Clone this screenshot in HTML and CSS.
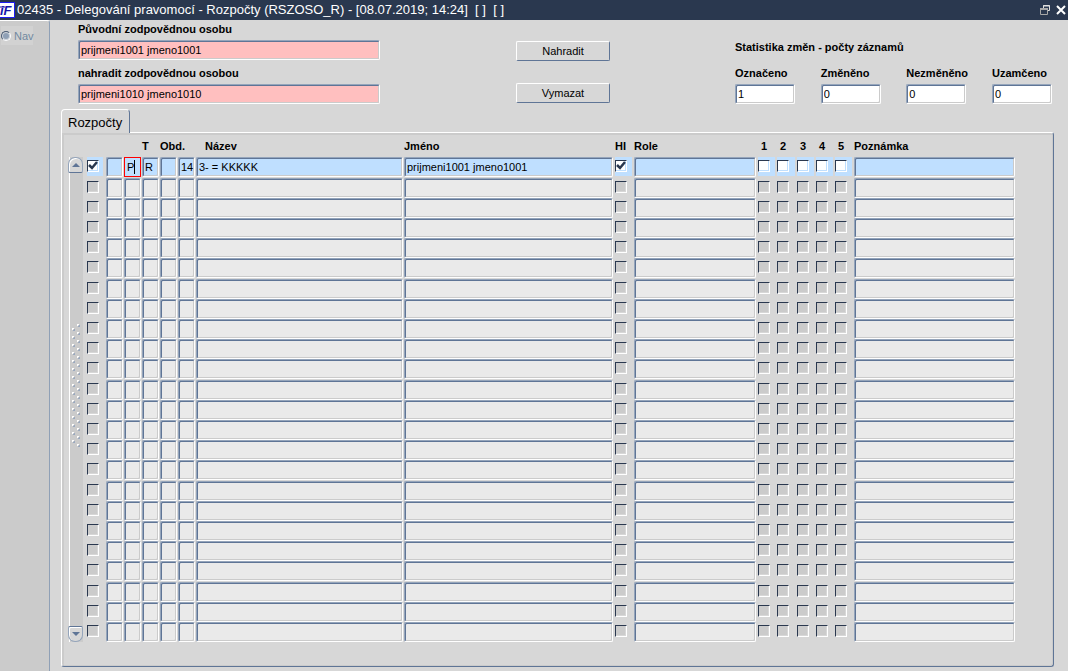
FILE: index.html
```html
<!DOCTYPE html>
<html lang="cs">
<head>
<meta charset="utf-8">
<title>Delegování pravomocí - Rozpočty</title>
<link rel="stylesheet" href="styles.css">
<script src="app.js" defer></script>
</head>
<body>
<div class="app">
  <header class="titlebar">
    <svg class="logo" width="15" height="18" viewBox="0 0 15 18" aria-hidden="true">
      <rect x="-1.500" y="1.500" width="16" height="15" fill="#fff" stroke="#1c1cf0"/>
      <path d="M0 6H5" stroke="#1515a8"/>
      <text class="logo-text" x="0" y="14">iF</text>
    </svg>
    <h1 class="title">02435 - Delegování pravomocí - Rozpočty (RSZOSO_R) - [08.07.2019; 14:24]&nbsp; [ ]&nbsp; [ ]</h1>
    <div class="window-buttons">
      <button class="window-button" type="button" aria-label="Obnovit">
        <svg width="11" height="10" viewBox="0 0 11 10" fill="none"><path d="M3.500 3V.5H9.500V5.500H8M3 1H10" stroke="#e0e0e0"/><path d="M.5 4V9.500H7.500V4" stroke="#a8a8a8"/><path d="M0 4H8" stroke="#a8a8a8" stroke-width="2"/></svg>
      </button>
      <button class="window-button" type="button" aria-label="Zavřít">
        <svg width="10" height="10" viewBox="0 0 10 10" fill="none"><path d="M1 1L9 9M9 1L1 9" stroke="#fff" stroke-width="2"/></svg>
      </button>
    </div>
  </header>
  <div class="body">
    <aside class="sidebar">
      <label class="nav"><input class="nav-radio" type="radio" name="nav" disabled>Nav</label>
    </aside>
    <main class="workspace">
      <form class="form">
        <div class="people">
          <label class="caption" for="from">Původní zodpovědnou osobu</label>
          <input class="field person" id="from" value="prijmeni1001 jmeno1001">
          <label class="caption" for="to">nahradit zodpovědnou osobou</label>
          <input class="field person" id="to" value="prijmeni1010 jmeno1010">
        </div>
        <div class="actions">
          <button class="button" type="button">Nahradit</button>
          <button class="button" type="button">Vymazat</button>
        </div>
        <section class="stats">
          <h2 class="caption stats-title">Statistika změn - počty záznamů</h2>
          <div class="stats-list">
            <label class="stat caption">Označeno<input class="field" value="1"></label>
            <label class="stat caption">Změněno<input class="field" value="0"></label>
            <label class="stat caption">Nezměněno<input class="field" value="0"></label>
            <label class="stat caption">Uzamčeno<input class="field" value="0"></label>
          </div>
        </section>
      </form>
      <div class="tabs"><button class="tab" type="button">Rozpočty</button></div>
      <section class="panel">
        <div class="scroll">
          <button class="scroll-button scroll-up" type="button" aria-label="Nahoru"><svg width="8" height="4" viewBox="0 0 8 4"><path d="M0 4L4 0L8 4Z" fill="#5f7596"/></svg></button>
          <svg class="grip" width="8" height="124" aria-hidden="true">
            <defs><pattern id="dots" width="8" height="8" patternUnits="userSpaceOnUse">
              <path d="M5 0h2v1h-1v1h-1zM0 4h2v1h-1v1h-1z" fill="#fff"/>
              <path d="M7 1h1v2h-2v-1h1zM2 5h1v2h-2v-1h1z" fill="#9aa9bf"/>
            </pattern></defs>
            <rect width="8" height="124" fill="url(#dots)"/>
          </svg>
          <button class="scroll-button scroll-down" type="button" aria-label="Dolů"><svg width="8" height="4" viewBox="0 0 8 4"><path d="M0 0L4 4L8 0Z" fill="#5f7596"/></svg></button>
        </div>
        <table class="records">
          <thead>
            <tr class="row head">
              <th></th><th></th><th></th><th>T</th><th>Obd.</th><th></th><th class="name-head">Název</th><th>Jméno</th><th>HI</th><th>Role</th>
              <th class="num">1</th><th class="num">2</th><th class="num">3</th><th class="num">4</th><th class="num">5</th><th>Poznámka</th>
            </tr>
          </thead>
          <tbody id="records"></tbody>
        </table>
      </section>
    </main>
  </div>
</div>
</body>
</html>
```
FILE: styles.css
```css
* { box-sizing: border-box; }
body {
  margin: 0;
  background: #d7d7d7;
  color: #000;
  font: 11px/14px "Liberation Sans", Arial, sans-serif;
}
button, input { font: inherit; color: inherit; margin: 0; }
h1, h2 { margin: 0; }
.app { display: flex; flex-direction: column; min-height: 100vh; }

.titlebar {
  display: flex;
  align-items: center;
  gap: 2px;
  height: 20px;
  padding-right: 2px;
  background: #2a384f;
  color: #fff;
}
.logo { flex: none; }
.logo-text { font: italic bold 13px "Liberation Sans", Arial, sans-serif; fill: #1515a8; }
.title { flex: 1; font-size: 13px; font-weight: 400; line-height: 18px; white-space: nowrap; }
.window-buttons { display: flex; gap: 5px; }
.window-button { display: flex; padding: 0; border: 0; background: none; }

.body { display: flex; flex: 1; }
.sidebar {
  flex: none;
  width: 50px;
  padding-top: 5px;
  border-top: 1px solid #fff;
  border-right: 1px solid #8fa0b6;
  border-top-right-radius: 3px;
  background: #cbcbcb;
}
.nav {
  display: flex;
  align-items: center;
  gap: 3px;
  width: 32px;
  height: 19px;
  margin-left: 1px;
  background: #d2d2d2;
  color: #7189a0;
}
.nav-radio {
  appearance: none;
  flex: none;
  width: 10px;
  height: 10px;
  border: 1px solid #4c5d75;
  border-right-color: #fff;
  border-bottom-color: #fff;
  border-radius: 50%;
  background: #8fa0b6;
  box-shadow: inset 0 0 0 1px #d0d4da;
}

.workspace { flex: 1; min-width: 0; padding: 2px 14px 4px 11px; }
.form {
  display: grid;
  grid-template-columns: 302px 136fr 94px 125fr 317px;
  padding: 0 2px 5px 17px;
}
.caption { font-weight: 700; white-space: nowrap; }
.people { display: flex; flex-direction: column; }
.people .caption { height: 18px; }
.person + .caption { margin-top: 6px; }
.actions { grid-column: 3; display: flex; flex-direction: column; gap: 22px; padding-top: 19px; }
.button {
  height: 20px;
  padding: 0;
  border: 1px solid #fff;
  border-right-color: #5f7596;
  border-bottom-color: #5f7596;
  border-radius: 2px;
  background: #d7d7d7;
}
.stats { grid-column: 5; padding-top: 18px; }
.stats-title { font-size: 11px; line-height: 14px; }
.stats-list { display: flex; justify-content: space-between; margin-top: 12px; }
.stat { display: flex; flex-direction: column; gap: 4px; width: 60px; }

.field {
  display: block;
  width: 100%;
  min-width: 0;
  height: 20px;
  padding: 0 0 0 2px;
  border: 1px solid #95a5bb;
  border-right-color: #fff;
  border-bottom-color: #fff;
  border-radius: 2px;
  outline: 0;
  background: #eaeaea;
  box-shadow: inset 1px 1px #5f7596, inset -1px -1px #cbcbcb;
  font-weight: 400;
}
.field.person { background: #ffbfbf; }
.stat .field { background: #fff; }

.tabs { display: flex; }
.tab {
  position: relative;
  height: 24px;
  margin-bottom: -1px;
  padding: 2px 7px 0 6px;
  border: 1px solid #fff;
  border-right-color: #5f7596;
  border-bottom: 0;
  border-radius: 4px 4px 0 0;
  background: #d7d7d7;
  font-size: 13px;
}
.panel {
  display: flex;
  gap: 3px;
  padding: 0 38px 24px 6px;
  border: 1px solid #fff;
  border-right-color: #5f7596;
  border-bottom-color: #5f7596;
  border-radius: 0 3px 3px 3px;
  box-shadow: inset 2px 2px #cbcbcb, inset -1px -1px #cbcbcb;
}
.scroll {
  display: flex;
  flex: none;
  flex-direction: column;
  align-items: center;
  justify-content: space-between;
  width: 15px;
  margin-top: 24px;
  background: linear-gradient(90deg, transparent 1px, #fff 1px, #fff 2px, #cbcbcb 2px);
}
.grip { margin-bottom: 28px; }
.scroll-button {
  display: flex;
  align-items: center;
  justify-content: center;
  width: 15px;
  height: 16px;
  padding: 0;
  border: 1px solid #95a5bb;
  background: #d7d7d7;
  box-shadow: inset 1px 1px #fff;
}
.scroll-up { border-radius: 7px 7px 2px 2px; border-bottom-color: #5f7596; }
.scroll-down { border-radius: 2px 2px 7px 7px; border-top-color: #5f7596; }

.records { display: block; flex: 1; min-width: 0; border-spacing: 0; }
.records thead, .records tbody { display: block; }
.row {
  display: grid;
  grid-template-columns: 20px repeat(5, 18px) 208fr 211fr 19px 124fr 19px 20px 19px 19px 19px 161fr;
  height: 20px;
}
.row:nth-child(5n+1) { height: 21px; }
.row.head { height: 24px; align-items: center; }
.head th { padding: 2px 0 0; text-align: left; white-space: nowrap; }
.head .name-head { padding-left: 9px; }
.head .num { padding-left: 3px; }
.row td { min-width: 0; padding: 0 1px 0 0; }
.row .wide { padding-right: 2px; }
.row .last { padding: 0; }
.row .check-cell { padding: 0 2px 1px 0; }
.row .first-check { padding: 0 3px 1px 1px; }
.check-back { position: relative; display: block; height: 19px; padding-top: 3px; }
.check {
  appearance: none;
  display: block;
  width: 12px;
  height: 12px;
  border: 1px solid #2a384f;
  border-right-color: #fff;
  border-bottom-color: #fff;
  background: #cbcbcb;
  box-shadow: inset -1px -1px #d7d7d7;
}
.current .field, .current .check-back { background: #bfdfff; }
.current .check { background: #fff; box-shadow: inset -1px -1px #bfdfff; }
.tick { position: absolute; left: 1px; top: 4px; pointer-events: none; }
.row .active { position: relative; padding-right: 1px; }
.current .active .field { border-color: #f00; border-radius: 0; box-shadow: none; }
.active::after {
  content: "";
  position: absolute;
  top: 3px;
  left: 10px;
  width: 1px;
  height: 14px;
  background: #000;
}
```
FILE: app.js
```js
const ROWS = 24;
const COLUMNS = [
  ["check", "Označit", "first-check"],
  ["text", "Příznak"], ["text", "Typ"], ["text", "T"], ["text", "Obd."], ["text", "Číslo"],
  ["text", "Název"], ["text", "Jméno", "wide"],
  ["check", "HI"],
  ["text", "Role", "wide"],
  ["check", "1"], ["check", "2"], ["check", "3"], ["check", "4"], ["check", "5"],
  ["text", "Poznámka", "last"]
];
const FIRST = [true, "", "P", "R", "", "14", "3- = KKKKK", "prijmeni1001 jmeno1001", true];
const TICK = '<svg class="tick" width="10" height="9" viewBox="0 0 10 9" fill="none"><path d="M1 4L4 7L9 1" stroke="#2a384f" stroke-width="2.500"/></svg>';

const cell = ([type, label, extra = ""], value) => {
  if (type === "check") {
    return `<td class="check-cell ${extra}"><span class="check-back"><input class="check" type="checkbox" aria-label="${label}"${value ? " checked" : ""}>${value ? TICK : ""}</span></td>`;
  }
  const active = value === "P" ? "active" : "";
  return `<td class="${extra} ${active}"><input class="field" aria-label="${label}" value="${value || ""}"></td>`;
};

document.getElementById("records").innerHTML = Array.from({ length: ROWS }, (_, r) =>
  `<tr class="row${r ? "" : " current"}">${COLUMNS.map((c, i) => cell(c, r ? "" : FIRST[i])).join("")}</tr>`
).join("");
```
